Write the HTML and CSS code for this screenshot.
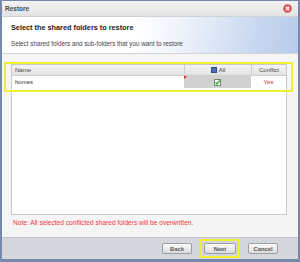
FILE: index.html
```html
<!DOCTYPE html>
<html lang="en">
<head>
    <meta charset="UTF-8">
    <title>Restore</title>
    <link rel="stylesheet" href="styles.css">
</head>
<body>
    <div class="dialog">
        <div class="titlebar">
            <span class="title">Restore</span>
            <span class="close">
                <svg width="9" height="9" viewBox="0 0 9 9">
                    <circle cx="4.5" cy="4.5" r="4.3" fill="#d9413f"/>
                    <circle cx="4.5" cy="4.5" r="3.2" fill="#e86a66"/>
                    <path d="M3 3 L6 6 M6 3 L3 6" stroke="#fff" stroke-width="1.2"/>
                </svg>
            </span>
        </div>
        <div class="header">
            <h1>Select the shared folders to restore</h1>
            <p>Select shared folders and sub-folders that you want to restore</p>
        </div>
        <div class="content">
            <div class="grid">
                <div class="row head">
                    <div class="cell name">Name</div>
                    <div class="cell all">
                        <span class="mini-check"></span>All
                    </div>
                    <div class="cell conflict">Conflict</div>
                </div>
                <div class="row">
                    <div class="cell name">homes</div>
                    <div class="cell all selected">
                        <span class="dirty"></span>
                        <svg width="7" height="7" viewBox="0 0 7 7">
                            <rect x="0.5" y="0.5" width="6" height="6" fill="#fff" stroke="#6f8a6f"/>
                            <path d="M1.5 3.5 L3 5 L5.8 1.3" stroke="#2eaa2e" stroke-width="1.4" fill="none"/>
                        </svg>
                    </div>
                    <div class="cell conflict yes">Yes</div>
                </div>
            </div>
            <p class="note">Note: All selected conflicted shared folders will be overwritten.</p>
            <div class="highlight grid-mark"></div>
        </div>
        <div class="footer">
            <button>Back</button>
            <span class="next-mark"><button>Next</button></span>
            <button>Cancel</button>
        </div>
    </div>
</body>
</html>
```

FILE: styles.css
```css
body {
    margin: 0;
    background: #7489ad;
    font-family: "Liberation Sans", Arial, sans-serif;
}
.dialog {
    height: 262px;
    box-sizing: border-box;
    border-style: solid;
    border-color: #7489ad;
    border-width: 1px 2px 3px 2px;
    display: flex;
    flex-direction: column;
    background: #f5f5f5;
}
.titlebar {
    height: 15px;
    display: flex;
    align-items: center;
    justify-content: space-between;
    padding: 0 6px 0 3px;
    background: linear-gradient(#f3f3f3, #e2e3e5);
    border-bottom: 1px solid #cfd2d6;
}
.title {
    font-size: 6.5px;
    font-weight: bold;
    color: #4a4a4a;
}
.close {
    display: flex;
}
.header {
    height: 37px;
    box-sizing: border-box;
    padding: 6px 9px 0;
    background: linear-gradient(100deg, #ffffff 45%, #eef3fb 60%, #c9d8f0 85%, #b7caea 100%);
    border-bottom: 1px solid #d2d4d8;
}
.header h1 {
    margin: 0;
    font-size: 7.3px;
    color: #222;
}
.header p {
    margin: 8px 0 0;
    font-size: 6.3px;
    color: #444;
}
.content {
    flex: 1;
    position: relative;
    padding: 10px 11px 0 9px;
    display: flex;
    flex-direction: column;
}
.grid {
    height: 149px;
    background: #fff;
    border: 1px solid #c9c9c9;
}
.row {
    display: flex;
    height: 12px;
    font-size: 6px;
    color: #333;
}
.row.head {
    height: 10px;
    background: linear-gradient(#f4f4f4, #e3e3e3);
    border-bottom: 1px solid #cfcfcf;
    color: #444;
}
.cell {
    display: flex;
    align-items: center;
    padding: 0 3px;
    position: relative;
}
.name {
    flex: 1;
}
.all {
    width: 67px;
    box-sizing: border-box;
    justify-content: center;
}
.conflict {
    width: 35px;
    box-sizing: border-box;
    justify-content: center;
}
.head .all, .head .conflict {
    border-left: 1px solid #cfcfcf;
}
.selected {
    background: #d1d1d1;
}
.yes {
    color: #e0242a;
}
.mini-check {
    width: 4px;
    height: 4px;
    margin-right: 2px;
    background: #4f6fbf;
    border: 1px solid #2f4a8f;
}
.dirty {
    position: absolute;
    left: 0;
    top: 0;
    border-top: 3px solid #d8262a;
    border-right: 3px solid transparent;
}
.note {
    margin: 4px 0 0 2px;
    font-size: 6.6px;
    color: #f0353b;
}
.highlight {
    position: absolute;
    border: 2px solid #eff033;
}
.grid-mark {
    left: 2px;
    top: 8px;
    width: 285px;
    height: 26px;
}
.footer {
    height: 22px;
    box-sizing: border-box;
    background: #d3d6db;
    border-top: 1px solid #c3c6cb;
    display: flex;
    align-items: center;
    justify-content: flex-end;
    gap: 12px;
    padding-right: 20px;
}
.footer button {
    width: 30px;
    height: 11px;
    padding: 0;
    font-family: inherit;
    font-size: 5.8px;
    font-weight: bold;
    color: #555;
    background: linear-gradient(#fbfbfb, #dcdcdc);
    border: 1px solid #9c9fa3;
    border-radius: 2px;
}
.next-mark {
    display: flex;
    padding: 2px;
    border: 2px solid #eff033;
    margin: 0 -4px;
}
.next-mark button {
    width: 32px;
}
```
